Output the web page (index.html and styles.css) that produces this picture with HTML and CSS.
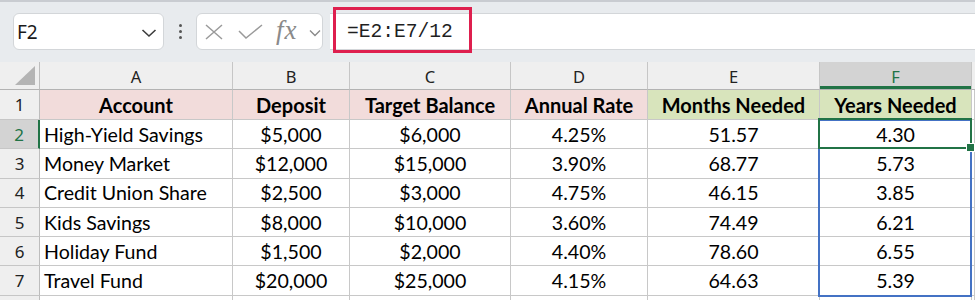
FILE: index.html
```html
<!DOCTYPE html>
<html>
<head>
<meta charset="utf-8">
<link rel="stylesheet" href="styles.css">
</head>
<body>
<div class="toolbar">
  <div class="namebox">
    <span class="nb-text">F2</span>
    <svg class="nb-chev" width="16" height="10" viewBox="0 0 16 10"><path d="M1.5 2 L8 8 L14.5 2" fill="none" stroke="#3c3c3c" stroke-width="1.6"/></svg>
  </div>
  <div class="dots"><i></i><i></i><i></i></div>
  <div class="fxbox">
    <svg class="ic-x" width="18" height="16" viewBox="0 0 18 16"><path d="M1 1 L17 15 M17 1 L1 15" stroke="#9a9a9a" stroke-width="1.5" fill="none"/></svg>
    <svg class="ic-check" width="25" height="15" viewBox="0 0 25 15"><path d="M1 7 L8 14 L24 1" stroke="#9a9a9a" stroke-width="1.5" fill="none"/></svg>
    <span class="fx">fx</span>
    <svg class="ic-chev" width="12" height="8" viewBox="0 0 12 8"><path d="M1 1.5 L6 6.5 L11 1.5" stroke="#8a8a8a" stroke-width="1.4" fill="none"/></svg>
  </div>
  <div class="formula">
    <span class="ftext">=E2:E7/12</span>
    <div class="highlight"></div>
  </div>
</div>

<div class="sheet">
  <div class="ch corner"><svg width="39" height="27" viewBox="0 0 39 27"><polygon points="35,4 35,23 15,23" fill="#b4b4b4"/></svg></div>
  <div class="ch">A</div>
  <div class="ch">B</div>
  <div class="ch">C</div>
  <div class="ch">D</div>
  <div class="ch">E</div>
  <div class="ch ch-sel">F</div>
  <div class="ch ch-last"></div>

  <div class="rh">1</div>
  <div class="c hd pink">Account</div>
  <div class="c hd pink">Deposit</div>
  <div class="c hd pink">Target Balance</div>
  <div class="c hd pink">Annual Rate</div>
  <div class="c hd green">Months Needed</div>
  <div class="c hd green">Years Needed</div>
  <div class="c"></div>

  <div class="rh rh-sel">2</div>
  <div class="c l">High-Yield Savings</div>
  <div class="c">$5,000</div>
  <div class="c">$6,000</div>
  <div class="c">4.25%</div>
  <div class="c">51.57</div>
  <div class="c sel">4.30<span class="range"></span><span class="active"><span class="handle"></span></span></div>
  <div class="c"></div>

  <div class="rh">3</div>
  <div class="c l">Money Market</div>
  <div class="c">$12,000</div>
  <div class="c">$15,000</div>
  <div class="c">3.90%</div>
  <div class="c">68.77</div>
  <div class="c">5.73</div>
  <div class="c"></div>

  <div class="rh">4</div>
  <div class="c l">Credit Union Share</div>
  <div class="c">$2,500</div>
  <div class="c">$3,000</div>
  <div class="c">4.75%</div>
  <div class="c">46.15</div>
  <div class="c">3.85</div>
  <div class="c"></div>

  <div class="rh">5</div>
  <div class="c l">Kids Savings</div>
  <div class="c">$8,000</div>
  <div class="c">$10,000</div>
  <div class="c">3.60%</div>
  <div class="c">74.49</div>
  <div class="c">6.21</div>
  <div class="c"></div>

  <div class="rh">6</div>
  <div class="c l">Holiday Fund</div>
  <div class="c">$1,500</div>
  <div class="c">$2,000</div>
  <div class="c">4.40%</div>
  <div class="c">78.60</div>
  <div class="c">6.55</div>
  <div class="c"></div>

  <div class="rh">7</div>
  <div class="c l">Travel Fund</div>
  <div class="c">$20,000</div>
  <div class="c">$25,000</div>
  <div class="c">4.15%</div>
  <div class="c">64.63</div>
  <div class="c">5.39</div>
  <div class="c"></div>

  <div class="rh"></div>
  <div class="c"></div><div class="c"></div><div class="c"></div><div class="c"></div><div class="c"></div><div class="c"></div><div class="c"></div>
</div>
</body>
</html>
```

FILE: styles.css
```css
html, body {
  margin: 0;
  padding: 0;
  background: #ffffff;
  width: 975px;
  height: 300px;
  overflow: hidden;
}

.toolbar {
  height: 62px;
  box-sizing: border-box;
  background: #e8ebee;
  border-top: 2px solid #c9ccd1;
  display: flex;
  align-items: flex-start;
  padding: 11px 0 0 13px;
}

.namebox {
  width: 151px;
  height: 37px;
  box-sizing: border-box;
  background: #fff;
  border: 1px solid #d3d6d9;
  border-radius: 6px;
  display: flex;
  align-items: center;
  justify-content: space-between;
  padding: 0 6px 0 3px;
  font-family: "Noto Sans", sans-serif;
  font-size: 19px;
  color: #1a1a1a;
}
.nb-chev { margin-top: 2px; }

.dots {
  width: 32px;
  height: 37px;
  display: flex;
  flex-direction: column;
  align-items: center;
  justify-content: center;
  gap: 3px;
}
.dots i {
  display: block;
  width: 3px;
  height: 3px;
  border-radius: 50%;
  background: #555;
}

.fxbox {
  width: 127px;
  height: 37px;
  box-sizing: border-box;
  background: #fff;
  border: 1px solid #d3d6d9;
  border-radius: 6px;
  display: flex;
  align-items: center;
  padding-left: 8px;
}
.ic-x { margin-right: 15px; }
.ic-check { margin-right: 13px; margin-top: -1px; }
.fx {
  font-family: "Liberation Serif", serif;
  font-style: italic;
  font-size: 27px;
  color: #8a8a8a;
  margin-right: 11px;
  margin-top: -3px;
  letter-spacing: 1px;
}
.ic-chev { margin-top: 2px; }

.formula {
  position: relative;
  flex: 1;
  margin-left: 7px;
  height: 37px;
  box-sizing: border-box;
  background: #fff;
  border-top: 1px solid #d3d6d9;
  border-bottom: 1px solid #d3d6d9;
  display: flex;
  align-items: center;
  padding-left: 17px;
  font-family: "Liberation Mono", monospace;
  font-size: 19.6px;
  color: #1f1f1f;
}
.highlight {
  position: absolute;
  left: 3px;
  top: -7px;
  width: 139px;
  height: 46px;
  box-sizing: border-box;
  border: 3px solid #de1f4e;
}

.sheet {
  display: grid;
  grid-template-columns: 40px 193px 117px 161px 137px 172px 152px 1fr;
  grid-template-rows: 28px 30px 29.3px 29.3px 29.3px 29.3px 29.3px 29.3px 10px;
}

.ch {
  background: #efefef;
  border-right: 1px solid #c6c6c6;
  border-bottom: 1px solid #b3b3b3;
  box-sizing: border-box;
  display: flex;
  align-items: center;
  justify-content: center;
  font-family: "Noto Sans", sans-serif;
  font-size: 16.5px;
  color: #222;
  padding-top: 1px;
}
.corner { border-right: 1px solid #bdbdbd; padding: 0; display: block; }
.corner svg { display: block; }
.ch-sel {
  background: #d3d3d3;
  color: #217346;
  box-shadow: inset 0 -3px 0 #217346;
}
.ch-last { border-right: none; }

.rh {
  background: #efefef;
  border-right: 1px solid #bdbdbd;
  border-bottom: 1px solid #c6c6c6;
  box-sizing: border-box;
  display: flex;
  align-items: center;
  justify-content: center;
  font-family: "Noto Sans", sans-serif;
  font-size: 17px;
  color: #222;
}
.rh-sel {
  background: #d3d3d3;
  color: #217346;
  border-right: 2px solid #217346;
}

.c {
  border-right: 1px solid #c8c8c8;
  border-bottom: 1px solid #c8c8c8;
  box-sizing: border-box;
  display: flex;
  align-items: center;
  justify-content: center;
  font-family: "Lato", sans-serif;
  font-size: 19.6px;
  color: #000;
  white-space: nowrap;
}
.c.l { justify-content: flex-start; padding-left: 4px; }
.hd { font-weight: bold; font-size: 20px; }
.pink { background: #f2dcdb; }
.green { background: #d8e4bc; }

.sel { position: relative; }
.range {
  position: absolute;
  left: -2px;
  top: -1px;
  right: -1px;
  height: 178px;
  border: 2px solid #4472c4;
  box-sizing: border-box;
  pointer-events: none;
}
.active {
  position: absolute;
  left: -2px;
  top: -2px;
  right: -1px;
  bottom: -1px;
  border: 2px solid #217346;
  box-sizing: border-box;
}
.handle {
  position: absolute;
  right: -5px;
  bottom: -5px;
  width: 7px;
  height: 7px;
  background: #217346;
  border: 1px solid #fff;
}
```
